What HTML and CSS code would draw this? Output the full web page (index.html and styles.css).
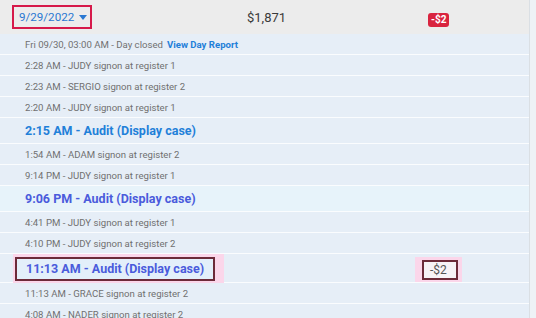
FILE: index.html
```html
<!DOCTYPE html>
<html>
  <head>
    <meta charset="UTF-8" />
    <title>Day Activity</title>
    <link rel="stylesheet" href="styles.css">
  </head>
  <body>
    <div id="log">
      <div class="head">
        <div class="date-cell">
          <span class="date-pick">9/29/2022 <span class="caret"></span></span>
        </div>
        <div class="total">$1,871</div>
        <div><span class="badge">-$2</span></div>
      </div>

      <div class="row">Fri 09/30, 03:00 AM - Day closed <a class="report">View Day Report</a></div>
      <div class="row">2:28 AM - JUDY signon at register 1</div>
      <div class="row">2:23 AM - SERGIO signon at register 2</div>
      <div class="row">2:20 AM - JUDY signon at register 1</div>
      <div class="row audit"><a class="audit-link">2:15 AM - Audit (Display case)</a></div>
      <div class="row">1:54 AM - ADAM signon at register 2</div>
      <div class="row">9:14 PM - JUDY signon at register 1</div>
      <div class="row audit fresh"><a class="audit-link visited">9:06 PM - Audit (Display case)</a></div>
      <div class="row">4:41 PM - JUDY signon at register 1</div>
      <div class="row">4:10 PM - JUDY signon at register 2</div>
      <div class="row audit marked">
        <span class="glow glow-left"><span class="box"><a class="audit-link visited">11:13 AM - Audit (Display case)</a></span></span>
        <span class="glow glow-right"><span class="box amount">-$2</span></span>
      </div>
      <div class="row">11:13 AM - GRACE signon at register 2</div>
      <div class="row">4:08 AM - NADER signon at register 2</div>
    </div>
  </body>
</html>
```
FILE: styles.css
```css
:root {
  --row: #e6eef7;
  --muted: #707070;
  --link: #1f80d9;
  --visited: #4a5bdc;
  --font: Roboto, "Open Sans", sans-serif;
}
body {
  margin: 0;
  background: #eef2f6;
  font-family: var(--font);
  overflow: hidden;
}
#log {
  width: 529px;
  border-right: 1px solid #dadfe4;
  min-height: 318px;
}
.head {
  display: grid;
  grid-template-columns: 235px 181px auto;
  align-items: center;
  height: 34px;
  padding-left: 12px;
  background: #ececec;
}
.date-pick {
  display: inline-flex;
  align-items: center;
  gap: 5px;
  height: 20px;
  padding: 0 3px 0 5px;
  border: 2px solid #d6194a;
  color: #2a78d2;
  font-size: 11.6px;
}
.caret {
  width: 0;
  height: 0;
  border-left: 4px solid transparent;
  border-right: 4px solid transparent;
  border-top: 5px solid #2a78d2;
}
.total {
  color: #3a3a3a;
  font-size: 13px;
}
.badge {
  display: inline-block;
  padding: 0 3px;
  line-height: 14px;
  border-radius: 3px;
  background: #d9243f;
  color: #fff;
  font-size: 10px;
  font-weight: bold;
}
.row {
  display: flex;
  align-items: center;
  height: 20px;
  padding-left: 25px;
  background: var(--row);
  border-bottom: 1px solid #fafcfe;
  color: var(--muted);
  font-size: 9.6px;
  white-space: nowrap;
}
.row:first-of-type {
  padding-top: 2px;
  height: 18px;
}
.report {
  margin-left: 4px;
  color: var(--link);
  font-weight: bold;
}
.row.audit {
  height: 25px;
}
.row.fresh {
  background: #e7f3fa;
}
.audit-link {
  color: var(--link);
  font-size: 12.5px;
  font-weight: bold;
}
.audit-link.visited {
  color: var(--visited);
}
.row.marked {
  display: grid;
  grid-template-columns: 402px auto;
  align-items: start;
  justify-items: start;
  height: 28px;
  padding-left: 13px;
}
.glow {
  display: flex;
  align-items: center;
  background: #fbd6ea;
}
.glow-left {
  height: 29px;
  padding: 0 9px 0 2px;
}
.glow-right {
  height: 25px;
  padding: 0 4px 0 7px;
  margin-top: 3px;
}
.box {
  display: flex;
  align-items: center;
  border: 2px solid #6c2a39;
  background: #e3effa;
}
.glow-left .box {
  height: 20px;
  padding: 0 9px;
}
.amount {
  height: 16px;
  padding: 0 9px 0 6px;
  background: #f7f2f6;
  color: #555;
  font-size: 12px;
}
```
